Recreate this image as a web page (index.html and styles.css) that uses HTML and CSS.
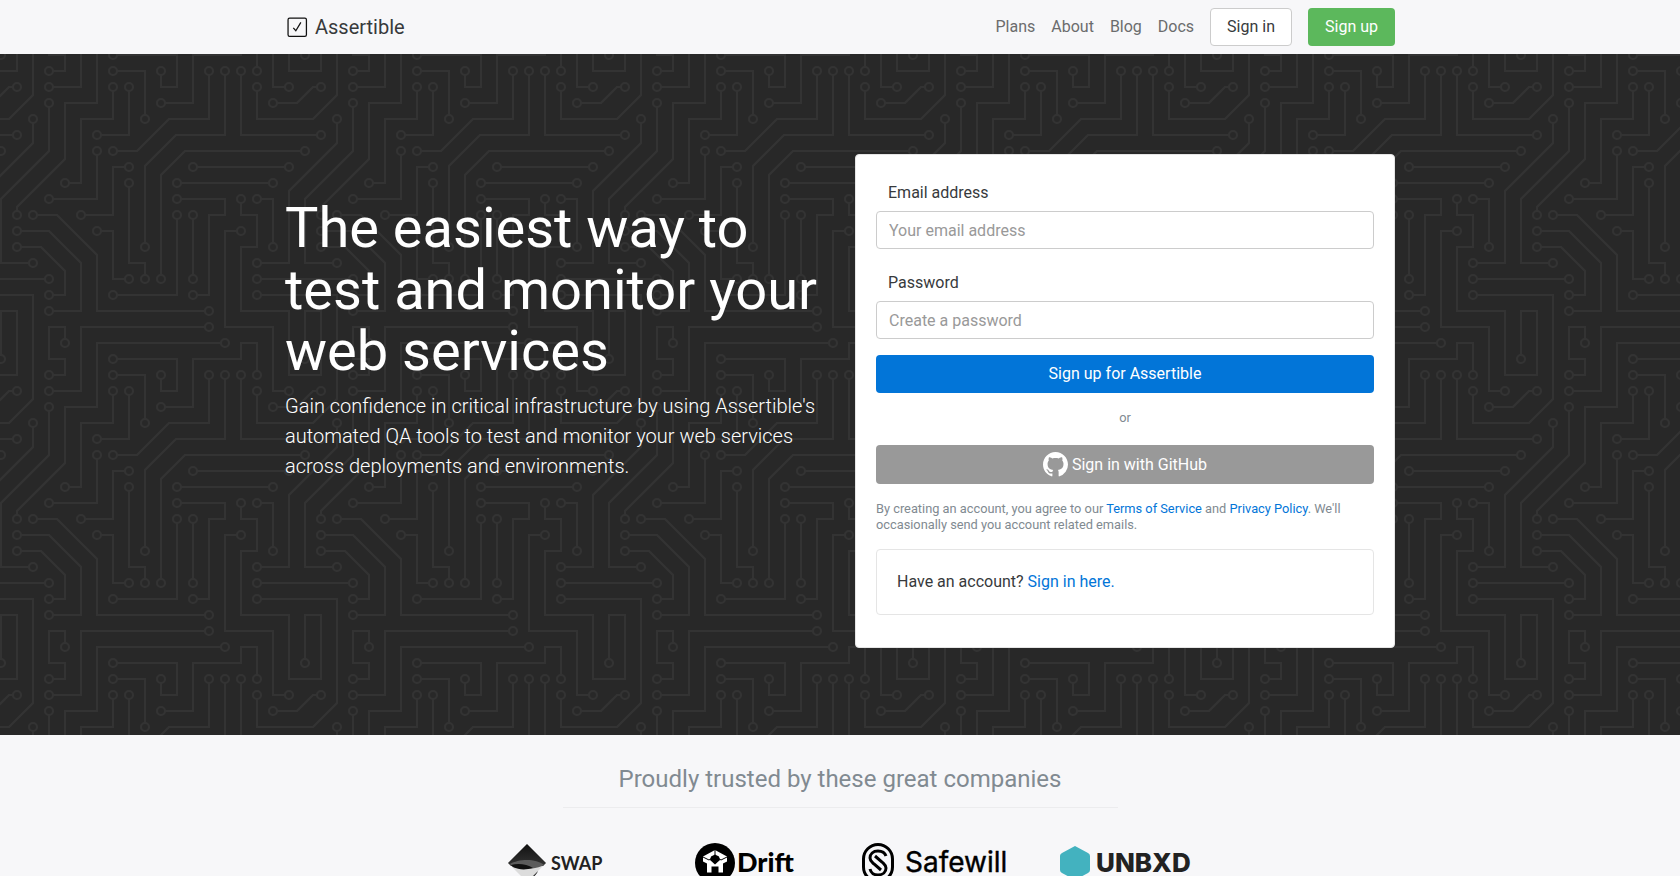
FILE: index.html
```html
<!DOCTYPE html>
<html lang="en">
<head>
<meta charset="utf-8">
<title>Assertible</title>
<link rel="stylesheet" href="styles.css">
</head>
<body>
<header class="topbar">
  <div class="container topbar-inner">
    <a class="brand" href="#">
      <svg class="brand-icon" viewBox="0 0 20 20" aria-hidden="true"><rect x="1" y="1" width="17.500" height="17.500" rx="1.500" fill="none" stroke="#111" stroke-width="1.2"/><path d="M6 10.400l2.400 2.700 4.800-8" fill="none" stroke="#111" stroke-width="1.2"/></svg>
      <span>Assertible</span>
    </a>
    <nav class="nav">
      <a class="nav-link" href="#">Plans</a>
      <a class="nav-link" href="#">About</a>
      <a class="nav-link" href="#">Blog</a>
      <a class="nav-link" href="#">Docs</a>
      <a class="btn btn-light" href="#">Sign in</a>
      <a class="btn btn-green" href="#">Sign up</a>
    </nav>
  </div>
</header>
<main>
  <section class="hero">
    <div class="container hero-inner">
      <div class="pitch">
        <h1>The easiest way to test and monitor your web services</h1>
        <p>Gain confidence in critical infrastructure by using Assertible's automated QA tools to test and monitor your web services across deployments and environments.</p>
      </div>
      <form class="card">
        <div class="field">
          <label for="email">Email address</label>
          <input id="email" type="email" placeholder="Your email address">
        </div>
        <div class="field">
          <label for="password">Password</label>
          <input id="password" type="password" placeholder="Create a password">
        </div>
        <button class="btn btn-blue" type="submit">Sign up for Assertible</button>
        <p class="or">or</p>
        <button class="btn btn-gray" type="button"><svg class="github" viewBox="0 0 16 16" aria-hidden="true"><path fill="#fff" d="M8 0C3.58 0 0 3.58 0 8c0 3.54 2.29 6.53 5.47 7.59.4.07.55-.17.55-.38 0-.19-.01-.82-.01-1.49-2.01.37-2.53-.49-2.69-.94-.09-.23-.48-.94-.82-1.13-.28-.15-.68-.52-.01-.53.63-.01 1.08.58 1.23.82.72 1.21 1.87.87 2.33.66.07-.52.28-.87.51-1.07-1.78-.2-3.64-.89-3.64-3.95 0-.87.31-1.59.82-2.15-.08-.2-.36-1.02.08-2.12 0 0 .67-.21 2.2.82.64-.18 1.32-.27 2-.27s1.36.09 2 .27c1.53-1.04 2.2-.82 2.2-.82.44 1.1.16 1.92.08 2.12.51.56.82 1.27.82 2.15 0 3.07-1.87 3.75-3.65 3.95.29.25.54.73.54 1.48 0 1.07-.01 1.93-.01 2.2 0 .21.15.46.55.38A8.01 8.01 0 0 0 16 8c0-4.42-3.58-8-8-8z"/></svg><span>Sign in with GitHub</span></button>
        <p class="terms">By creating an account, you agree to our <a href="#">Terms of Service</a> and <a href="#">Privacy Policy</a>. We'll occasionally send you account related emails.</p>
        <p class="have">Have an account? <a href="#">Sign in here.</a></p>
      </form>
    </div>
  </section>
  <section class="trusted">
    <h2>Proudly trusted by these great companies</h2>
    <hr>
    <div class="logos">
      <svg class="logo" width="95" height="50" viewBox="0 0 95 50" role="img" aria-label="Swap">
        <defs><linearGradient id="swap-dark" x1="0" y1="0" x2="0" y2="1"><stop offset="0" stop-color="#111"/><stop offset="1" stop-color="#333"/></linearGradient></defs>
        <path d="M19 5L38 24 19 43 0 24z" fill="#dcdcdc"/>
        <path d="M19 5L38 24l-3 3H3l-3-3z" fill="url(#swap-dark)"/>
        <path d="M2 25c8-5 26-6 34 1-6 4-22 5-31 2z" fill="#5c5c5c"/>
        <path d="M3 26c7-2 16-1 22 3-7 2-14 2-20-1z" fill="#111"/>
        <path d="M19 43l11-11c-2 5-6 8-14 8z" fill="#222"/>
        <text x="43" y="31" class="word-swap">SWAP</text>
      </svg>
      <svg class="logo" width="100" height="50" viewBox="0 0 100 50" role="img" aria-label="Drift">
        <circle cx="20" cy="24" r="20"/>
        <path d="M20 11l12 6.500v5l-4 2v9h-4.500v-6h-7v6H12v-9l-4-2v-5z" fill="#fff"/>
        <path d="M20 15.500l4 2 1 3.500-5 4.500-5-4.500 1-3.500z"/>
        <path d="M20 11v6M8 18l6 3 3-2M32 18l-6 3-3-2" fill="none" stroke="#000"/>
        <text x="42" y="33" class="word-drift">Drift</text>
      </svg>
      <svg class="logo" width="147" height="50" viewBox="0 0 147 50" role="img" aria-label="Safewill">
        <rect x="1.500" y="5.500" width="29" height="37" rx="14.500" fill="none" stroke="#000" stroke-width="3"/>
        <path d="M24 17c-1-3-4-5-8-5-5 0-8 3-8 7 0 3 2 4 4 6l7 6M8 30c1 4 4 6 8 6 5 0 8-3 8-7 0-3-2-4-4-6l-7-6" fill="none" stroke="#000" stroke-width="3"/>
        <text x="43" y="33" class="word-safewill">Safewill</text>
      </svg>
      <svg class="logo" width="131" height="50" viewBox="0 0 131 50" role="img" aria-label="Unbxd">
        <path d="M15 7l13 7q2 1 2 3v14q0 2-2 3l-13 7-13-7q-2-1-2-3V17q0-2 2-3z" fill="#43b2bf"/>
        <text x="36" y="33" class="word-unbxd">UNBXD</text>
      </svg>
    </div>
  </section>
</main>
</body>
</html>
```
FILE: styles.css
```css
* { box-sizing: border-box; }
body {
  margin: 0;
  background: #f7f7f9;
  color: #373a3c;
  font: 16px/24px Roboto, "Liberation Sans", sans-serif;
}
a { color: #0275d8; text-decoration: none; }
h1, h2, p { margin: 0; font-weight: 400; }
.container { max-width: 1140px; margin: 0 auto; padding: 0 15px; }

.topbar-inner { display: flex; justify-content: space-between; align-items: center; height: 54px; }
.brand { display: flex; align-items: center; gap: 7px; padding-left: 2px; color: #373a3c; font-size: 20px; }
.brand-icon { width: 21px; height: 21px; }
.nav { display: flex; align-items: center; gap: 16px; }
.nav-link { color: #6b6c6d; }

.btn {
  display: flex;
  align-items: center;
  justify-content: center;
  padding: 6px 16px;
  border: 1px solid transparent;
  border-radius: 4px;
  color: #fff;
  font: inherit;
}
.btn-light { background: #fff; border-color: #ccc; color: #373a3c; }
.btn-green { background: #5cb85c; }
.btn-blue { width: 100%; background: #0275d8; }
.btn-gray { width: 100%; gap: 4px; background: #999; }
.github { width: 25px; height: 25px; }

.hero {
  padding: 100px 0 87px;
  background-color: #282828;
  background-image: url("data:image/svg+xml,%3Csvg xmlns='http://www.w3.org/2000/svg' width='304' height='304'%3E%3Cdefs%3E%3Cmarker id='c' markerUnits='userSpaceOnUse' markerWidth='12' markerHeight='12' refX='6' refY='6'%3E%3Ccircle cx='6' cy='6' r='4' fill='%23282828' stroke='%23333' stroke-width='2'/%3E%3C/marker%3E%3C/defs%3E%3Cg fill='none' stroke='%23333' stroke-width='2'%3E%3Cpath d='M48 1H65M192 1H242M33 0V41L9 65H0M0 241H33V304M17 0V17H0M289 0V17H304M241 304V289H257V304M1 304V257H17V304'/%3E%3Cg marker-start='url(%23c)'%3E%3Cpath d='M49 225H0'/%3E%3Cpath d='M209 273H81V304'/%3E%3Cpath d='M257 225H304'/%3E%3Cpath d='M257 241H304'/%3E%3Cpath d='M17 81H0'/%3E%3Cpath d='M257 17V0'/%3E%3Cpath d='M241 17V81H304'/%3E%3Cpath d='M257 33V65H304'/%3E%3Cpath d='M65 289V273H49V304'/%3E%3Cpath d='M241 177H225V273H273V304'/%3E%3Cpath d='M289 33H273V0'/%3E%3Cpath d='M49 33H81V0'/%3E%3Cpath d='M225 289H97V304'/%3E%3Cpath d='M241 145V161H257V193H241V257H289V304'/%3E%3Cpath d='M49 17H65V1H48'/%3E%3Cpath d='M161 49H193V1H242'/%3E%3Cpath d='M17 161V153L65 105V49H97V0'/%3E%3Cpath d='M33 65V89L-1 123'/%3E%3Cpath d='M17 33H9L-1 43'/%3E%3Cpath d='M273 49H297L306 40'/%3E%3Cpath d='M257 209H289V137L306 120'/%3E%3Cpath d='M209 257H97V201L57 161H33' marker-end='url(%23c)'/%3E%3C/g%3E%3Cg marker-start='url(%23c)' marker-end='url(%23c)'%3E%3Cpath d='M273 129H177'/%3E%3Cpath d='M193 113H289'/%3E%3Cpath d='M193 225V161'/%3E%3Cpath d='M129 129V209H145V225'/%3E%3Cpath d='M129 113H113V161H81'/%3E%3Cpath d='M113 241H177V161'/%3E%3Cpath d='M97 177H113V225H129'/%3E%3Cpath d='M257 145H273V193'/%3E%3Cpath d='M193 241H209V161H225V145H177'/%3E%3Cpath d='M97 97V145H49'/%3E%3Cpath d='M113 33V65H81V129H65'/%3E%3Cpath d='M97 81H129V33'/%3E%3Cpath d='M113 17H145V65'/%3E%3Cpath d='M113 1H177V33H161V17'/%3E%3Cpath d='M113 97H137L169 65H209V17'/%3E%3Cpath d='M145 193V112L176 81H225V17'/%3E%3Cpath d='M161 225V121L185 97H305'/%3E%3Cpath d='M49 49V97L1 145V209H33'/%3E%3Cpath d='M49 241H65V217L41 193H17'/%3E%3Cpath d='M49 257H81V209L49 177H17'/%3E%3C/g%3E%3Cg fill='%23282828'%3E%3Ccircle cx='1' cy='1' r='4'/%3E%3Ccircle cx='305' cy='1' r='4'/%3E%3Ccircle cx='1' cy='305' r='4'/%3E%3Ccircle cx='305' cy='305' r='4'/%3E%3Ccircle cx='1' cy='97' r='4'/%3E%3Ccircle cx='113' cy='305' r='4'/%3E%3C/g%3E%3C/g%3E%3C/svg%3E");
}
.hero-inner { display: grid; grid-template-columns: 1fr 1fr; gap: 30px; align-items: start; }
.pitch { padding-top: 44px; color: #fff; }
.pitch h1 { font-size: 56px; line-height: 1.1; }
.pitch p { margin-top: 8px; font-size: 20px; line-height: 30px; font-weight: 300; }

.card { padding: 26px 20px 32px; border: 1px solid #e5e5e5; border-radius: 4px; background: #fff; }
.field { margin-bottom: 16px; }
.field + .field { margin-top: 16px; padding-top: 6px; }
.field label { display: block; margin-bottom: 6px; padding-left: 12px; }
.field input {
  display: block;
  width: 100%;
  height: 38px;
  padding: 6px 12px;
  border: 1px solid #ccc;
  border-radius: 4px;
  background: #fff;
  color: #55595c;
  font: inherit;
}
.field input::placeholder { color: #999; }
.or { margin: 14px 0 16px; color: #818a91; font-size: 80%; line-height: 22px; text-align: center; }
.terms { margin-top: 17px; color: #818a91; font-size: 80%; line-height: 16px; }
.have { margin-top: 16px; padding: 20px; border: 1px solid #e5e5e5; border-radius: 4px; }

.trusted { padding-top: 28px; }
.trusted h2 { color: #818a91; font-size: 24px; line-height: 32px; text-align: center; }
.trusted hr { max-width: 555px; margin: 12px auto 31px; border: 0; border-top: 1px solid #ececee; }
.logos { display: grid; grid-template-columns: repeat(4, 190px); justify-content: center; justify-items: center; }
.logo { overflow: visible; }
.word-swap { font: 700 18px Lato, sans-serif; fill: #222; }
.word-drift { font: 900 27px Lato, sans-serif; }
.word-safewill { font: 400 28px Inter, sans-serif; stroke: #000; stroke-width: 0.4; }
.word-unbxd { font: 800 26px Inter, sans-serif; fill: #222; }
```
